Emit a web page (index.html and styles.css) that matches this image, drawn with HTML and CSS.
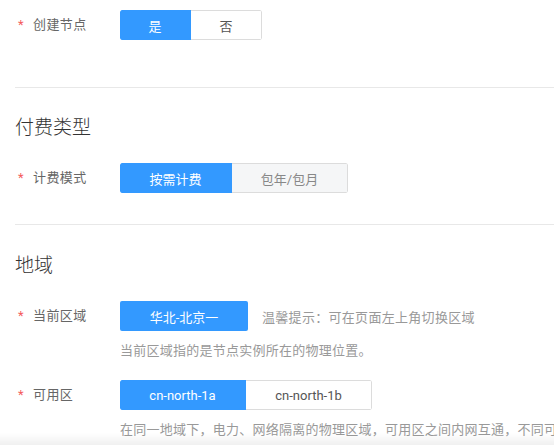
FILE: index.html
```html
<!DOCTYPE html>
<html lang="zh-CN">
<head>
<meta charset="utf-8">
<title>创建节点</title>
<link rel="stylesheet" href="styles.css">
</head>
<body>
<div class="page">
  <div class="row row-first">
    <div class="label"><span class="star">*</span>创建节点</div>
    <div class="group">
      <span class="opt active w71">是</span>
      <span class="opt w71">否</span>
    </div>
  </div>
  <div class="divider div-first"></div>

  <h2 class="heading">付费类型</h2>
  <div class="row row-after-heading">
    <div class="label"><span class="star">*</span>计费模式</div>
    <div class="group">
      <span class="opt active w112">按需计费</span>
      <span class="opt muted w116">包年/包月</span>
    </div>
  </div>
  <div class="divider div-second"></div>

  <h2 class="heading heading-region">地域</h2>
  <div class="row row-region">
    <div class="label"><span class="star">*</span>当前区域</div>
    <div class="single">华北-北京一</div>
    <div class="tip">温馨提示：可在页面左上角切换区域</div>
  </div>
  <div class="desc">当前区域指的是节点实例所在的物理位置。</div>

  <div class="row row-az">
    <div class="label"><span class="star">*</span>可用区</div>
    <div class="group">
      <span class="opt active w126">cn-north-1a</span>
      <span class="opt w126">cn-north-1b</span>
    </div>
  </div>
  <div class="desc desc-last">在同一地域下，电力、网络隔离的物理区域，可用区之间内网互通，不同可用区之间物理隔离。</div>
</div>
<div class="bottom-shade"></div>
</body>
</html>
```

FILE: styles.css
```css
html, body {
  margin: 0;
  padding: 0;
  background: #ffffff;
  overflow: hidden;
}
body {
  font-family: Roboto, "Noto Sans CJK SC", sans-serif;
  font-size: 13px;
  color: #333;
}
.page {
  padding-left: 15px;
  padding-top: 10px;
  overflow: hidden;
}
.row {
  display: flex;
  align-items: center;
  height: 30px;
}
.label {
  width: 105px;
  box-sizing: border-box;
  padding-left: 3px;
  color: #666;
  font-size: 13px;
  letter-spacing: 0.4px;
  line-height: 30px;
  white-space: nowrap;
}
.star {
  color: #f45b5b;
  display: inline-block;
  width: 15px;
  font-size: 13px;
}
.group {
  display: flex;
  height: 30px;
  border-radius: 2px;
  overflow: hidden;
}
.opt {
  display: flex;
  align-items: center;
  justify-content: center;
  height: 30px;
  box-sizing: border-box;
  border: 1px solid #dcdcdc;
  border-left: none;
  background: #fff;
  color: #555;
  font-size: 13px;
}
.opt:last-child {
  border-radius: 0 2px 2px 0;
}
.opt.active {
  background: #3399ff;
  border-color: #3399ff;
  color: #fff;
  border-radius: 2px 0 0 2px;
}
.opt.muted {
  background: #f5f6f7;
  color: #888;
}
.w71 { width: 71px; }
.w112 { width: 112px; }
.w116 { width: 116px; }
.w126 { width: 126px; }
.divider {
  height: 1px;
  background: #e8e8e8;
}
.div-first { margin-top: 47px; }
.div-second { margin-top: 31px; }
.heading {
  margin: 28px 0 0 0;
  font-size: 19px;
  font-weight: 300;
  line-height: 24px;
  color: #333;
}
.heading-region { margin-top: 29px; }
.row-after-heading { margin-top: 23px; }
.row-region { margin-top: 23px; }
.single {
  width: 128px;
  height: 30px;
  background: #3399ff;
  color: #fff;
  border-radius: 2px;
  display: flex;
  align-items: center;
  justify-content: center;
  font-size: 13px;
}
.tip {
  margin-left: 14px;
  color: #999;
  font-size: 13px;
  letter-spacing: 0.3px;
  white-space: nowrap;
}
.desc {
  margin-top: 10px;
  padding-left: 105px;
  color: #999;
  font-size: 13px;
  letter-spacing: 0.25px;
  line-height: 20px;
  white-space: nowrap;
}
.row-az { margin-top: 19px; }
.bottom-shade {
  position: fixed;
  left: 0;
  right: 0;
  bottom: 0;
  height: 12px;
  background: linear-gradient(to bottom, rgba(0,0,0,0), rgba(0,0,0,0.06));
}
```
